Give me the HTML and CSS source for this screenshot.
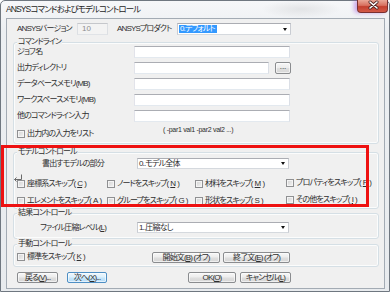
FILE: index.html
```html
<!DOCTYPE html>
<html lang="ja">
<head>
<meta charset="utf-8">
<link rel="stylesheet" href="styles.css">
</head>
<body>
<div class="window">
  <div class="titlebar">
    <span class="title">ANSYSコマンドおよびモデルコントロール</span>
    <div class="close">
      <svg width="31" height="13" viewBox="0 0 31 13">
        <path d="M12 3 L19 9 M19 3 L12 9" stroke="#4a2020" stroke-width="3" stroke-linecap="round"/>
        <path d="M12 3 L19 9 M19 3 L12 9" stroke="#ffffff" stroke-width="1.6" stroke-linecap="round"/>
      </svg>
    </div>
  </div>
  <div class="client">
    <div class="row-version">
      <span class="lbl w60">ANSYSバージョン</span>
      <span class="input disabled w31">10</span>
      <span class="lbl w60 ml9">ANSYSプロダクト</span>
      <span class="select w114"><span class="hl">0.デフォルト</span></span>
    </div>

    <div class="group">
      <div class="gtitle">コマンドライン</div>
      <div class="frow first"><span class="flabel">ジョブ名</span><span class="input w156"></span></div>
      <div class="frow"><span class="flabel">出力ディレクトリ</span><span class="input w135"></span><span class="btn dots">...</span></div>
      <div class="frow"><span class="flabel">データベースメモリ(MB)</span><span class="input w156"></span></div>
      <div class="frow"><span class="flabel">ワークスペースメモリ(MB)</span><span class="input w156"></span></div>
      <div class="frow"><span class="flabel">他のコマンドライン入力</span><span class="input w156"></span></div>
      <div class="frow hintrow">
        <span class="chk w149"><span class="box"></span>出力内の入力をリスト</span>
        <span class="hint">( -par1 val1 -par2 val2 ...)</span>
      </div>
    </div>

    <div class="group g2">
      <div class="gtitle">モデルコントロール</div>
      <div class="srow"><span class="slabel pl28">書出すモデルの部分</span><span class="select w152"><span class="val">0..モデル全体</span></span></div>
      <svg class="retmark" width="10" height="8" viewBox="0 0 10 8">
        <path d="M8.5 0.5 V5.5 H1.5 M1.5 5.5 L3.5 3.5 M1.5 5.5 L3.5 7.5" fill="none" stroke="#6a6a6a" stroke-width="1"/>
      </svg>
      <div class="cgrid">
        <span class="chk"><span class="box"></span>座標系スキップ(<u>C</u>)</span>
        <span class="chk"><span class="box"></span>ノードをスキップ(<u>N</u>)</span>
        <span class="chk"><span class="box"></span>材料をスキップ(<u>M</u>)</span>
        <span class="chk up"><span class="box"></span>プロパティをスキップ(<u>P</u>)</span>
        <span class="chk"><span class="box"></span>エレメントをスキップ(<u>A</u>)</span>
        <span class="chk"><span class="box"></span>グループをスキップ(<u>G</u>)</span>
        <span class="chk"><span class="box"></span>形状をスキップ(<u>S</u>)</span>
        <span class="chk up"><span class="box"></span>その他をスキップ(<u>I</u>)</span>
      </div>
    </div>

    <div class="group g3">
      <div class="gtitle">結果コントロール</div>
      <div class="srow"><span class="slabel pl26">ファイル圧縮レベル(<u>L</u>)</span><span class="select w152"><span class="val">1..圧縮なし</span></span></div>
    </div>

    <div class="group g4">
      <div class="gtitle">手動コントロール</div>
      <div class="mrow">
        <span class="chk w138"><span class="box"></span>標準をスキップ(<u>K</u>)</span>
        <span class="btn w68">開始文(<u>B</u>) (オフ)</span>
        <span class="btn w67 ml3">終了文(<u>E</u>) (オフ)</span>
      </div>
    </div>

    <div class="brow">
      <span class="btn w41">戻る(<u>V</u>)...</span>
      <span class="btn def w40 ml9">次へ(<u>X</u>)...</span>
      <span class="btn w48 ml81">OK(<u>O</u>)</span>
      <span class="btn w51 ml4">キャンセル(<u>L</u>)</span>
    </div>
  </div>
  <div class="annot"></div>
</div>
</body>
</html>
```

FILE: styles.css
```css
* { box-sizing: border-box; }
html, body { margin: 0; padding: 0; background: #ffffff; }
body {
  font-family: "Liberation Sans", "Noto Sans CJK JP", sans-serif;
  font-size: 8px;
  letter-spacing: -0.85px;
  color: #2e2e2e;
  font-feature-settings: "palt" 1;
}
u { text-decoration: underline; text-underline-offset: 1px; }

.window {
  position: relative;
  width: 390px;
  height: 292px;
  border: 1px solid #6f7780;
  border-radius: 5px 5px 0 0;
  background: linear-gradient(#f6f7f9, #eceff2 30px, #e8ebee);
}
.titlebar {
  height: 17px;
  display: flex;
  justify-content: space-between;
  align-items: flex-start;
  background: radial-gradient(ellipse 40px 9px at 300px 8px, rgba(0,0,0,0.07), rgba(0,0,0,0));
}
.title { font-size: 8.5px; letter-spacing: -0.9px; line-height: 17px; padding-left: 5px; color: #1e1e1e; }
.close {
  width: 31px;
  height: 13px;
  margin-top: -1px;
  margin-right: 1px;
  border: 1px solid #7a3030;
  border-top: none;
  border-radius: 0 0 4px 4px;
  background: linear-gradient(#eaa898, #d8705f 45%, #c4402f 55%, #d25a48);
  box-shadow: -3px 0 4px rgba(150, 70, 210, 0.45);
}
.close svg { display: block; margin-top: -1px; }

.client {
  margin: 0 4px 0 5px;
  height: 271px;
  border: 1px solid #a3abb4;
  background: #f0f0f0;
  padding-top: 4px;
}

.row-version { display: flex; align-items: center; height: 12px; padding-left: 10px; }
.lbl { line-height: 12px; white-space: nowrap; }
.w60 { width: 60px; }
.w31 { width: 31px; }
.w114 { width: 114px; }
.w156 { width: 156px; }
.w135 { width: 135px; }
.w152 { width: 152px; }
.w149 { width: 149px; }
.w138 { width: 138px; }
.w68 { width: 68px; }
.w67 { width: 67px; }
.w41 { width: 41px; }
.w40 { width: 40px; }
.w48 { width: 48px; }
.w51 { width: 51px; }
.ml9 { margin-left: 9px; }
.ml3 { margin-left: 3px; }
.ml4 { margin-left: 4px; }
.ml81 { margin-left: 81px; }
.pl28 { padding-left: 28px; }
.pl26 { padding-left: 26px; }

.input {
  display: block;
  height: 12px;
  background: #fff;
  border: 1px solid;
  border-color: #abadb3 #dbdfe6 #e3e9ef #e2e3ea;
}
.input.disabled {
  background: #f3f3f3;
  color: #8d8d8d;
  border-color: #c5c7cb #dcdfe3 #e0e3e7 #dcdfe3;
  padding-left: 4px;
  line-height: 10px;
  letter-spacing: 0;
}
.select {
  position: relative;
  display: flex;
  align-items: center;
  height: 12px;
  background: #fff;
  border: 1px solid;
  border-color: #abadb3 #c9ccd2 #d5d9de #c9ccd2;
}
.select::after {
  content: "";
  position: absolute;
  right: 3px;
  top: 4px;
  border-top: 3px solid #111;
  border-left: 2px solid transparent;
  border-right: 2px solid transparent;
}
.hl { margin-left: 1px; padding: 0 2px 0 1px; background: #3399ff; color: #fff; line-height: 8px; height: 8px; }
.val { padding-left: 1px; line-height: 9px; }

.group {
  position: relative;
  margin: 7px 0 0 6px;
  width: 366px;
  border: 1px solid #d5dfe5;
  border-radius: 3px;
  box-shadow: inset 0 0 0 1px #fbfcfc;
  padding-bottom: 5px;
}
.gtitle {
  position: relative;
  width: max-content;
  margin: -7px 0 -5px 3px;
  padding: 0 1px;
  line-height: 12px;
  background: #f0f0f0;
}

.frow { display: flex; height: 12px; margin-top: 4px; }
.frow.first { margin-top: 3px; }
.flabel { width: 120px; padding-left: 3px; line-height: 12px; white-space: nowrap; }
.btn.dots { width: 16px; height: 12px; margin-left: 6px; line-height: 8px; letter-spacing: 0; }

.frow.hintrow { height: 13px; margin-top: 3px; }
.hintrow .chk { align-self: flex-end; height: 8px; }
.hint { align-self: flex-start; line-height: 9px; font-size: 7px; letter-spacing: -0.3px; }

.chk { display: flex; align-items: center; gap: 2px; padding-left: 3px; white-space: nowrap; line-height: 8px; }
.box {
  flex: none;
  width: 8px;
  height: 8px;
  border: 1px solid #8f9092;
  background: linear-gradient(135deg, #d2d2d2, #f4f4f4);
  box-shadow: inset 0 0 0 1px #f4f4f4;
}

.g2 { margin-top: 8px; padding-bottom: 1px; }
.srow { display: flex; align-items: center; height: 11px; margin-top: 5px; }
.srow .select { height: 11px; }
.srow .select::after { top: 3px; }
.slabel { width: 123px; white-space: nowrap; line-height: 11px; }
.retmark { position: absolute; left: -1px; top: 21px; }
.cgrid {
  display: grid;
  grid-template-columns: 93px 88px 91px auto;
  grid-auto-rows: 12px;
  row-gap: 5px;
  margin-top: 9px;
}
.cgrid .chk { padding-left: 0; }
.cgrid .chk:nth-child(4n+1) { padding-left: 3px; }
.cgrid .chk.up { margin-top: -3px; }

.g3 { margin-top: 4px; }
.g3 .srow { margin-top: 8px; }

.g4 { margin-top: 5px; padding-bottom: 3px; }
.mrow { display: flex; align-items: center; height: 12px; margin-top: 6px; }

.btn {
  display: block;
  height: 11px;
  border: 1px solid #8a8c8f;
  border-radius: 2px;
  background: linear-gradient(#f7f7f7, #ececec 48%, #dfdfdf 52%, #d6d6d6);
  text-align: center;
  line-height: 9px;
  white-space: nowrap;
  box-shadow: inset 0 0 0 1px rgba(255,255,255,0.6);
}
.btn.def {
  border-color: #4e8fc4;
  background: linear-gradient(#eef7fd, #dcf0fc 48%, #c6e6fb 52%, #b6dcf7);
}
.brow { display: flex; height: 11px; margin-top: 5px; padding-left: 10px; }

.annot {
  position: absolute;
  left: 0;
  top: 144px;
  width: 368px;
  height: 62px;
  border: 3px solid #ee1111;
}
```
